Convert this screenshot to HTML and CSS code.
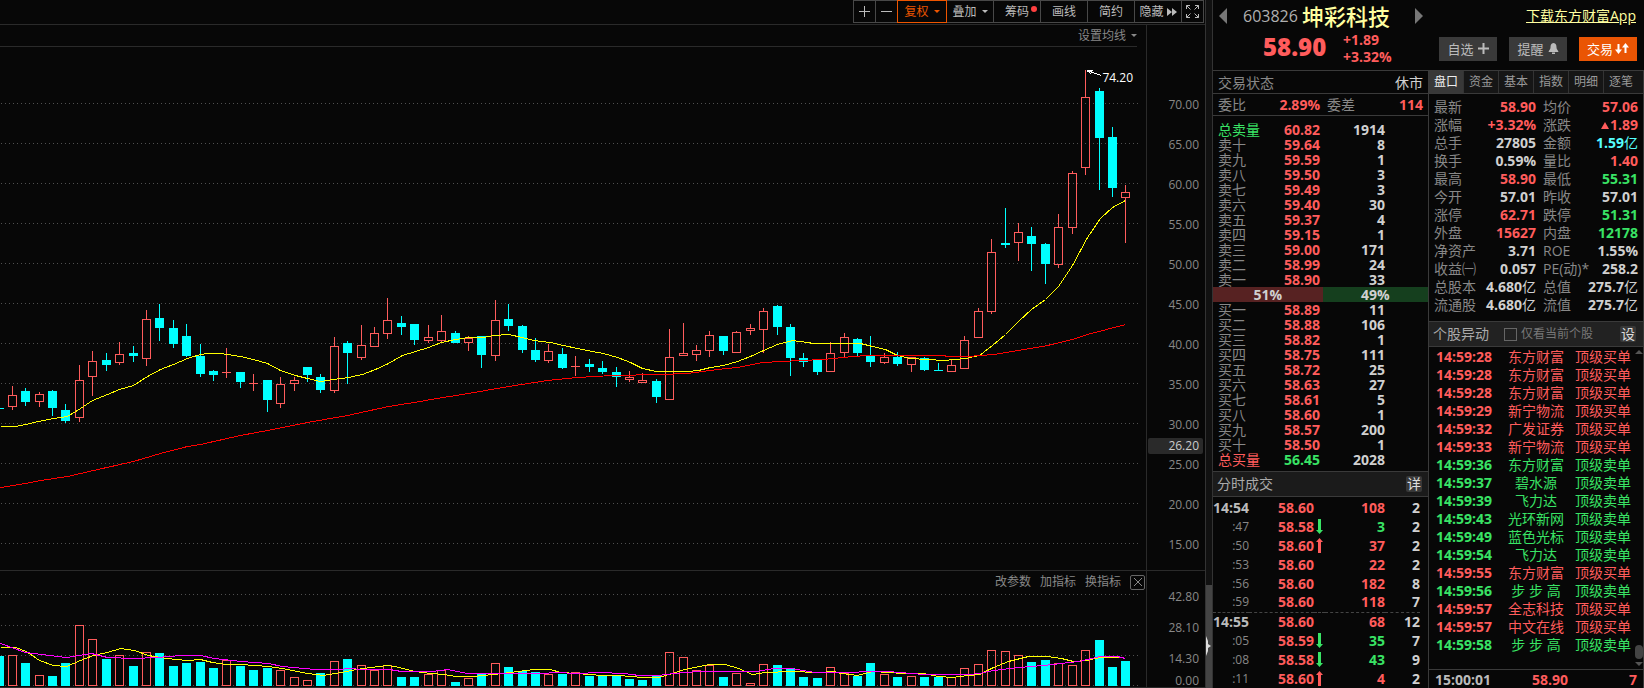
FILE: index.html
```html
<!DOCTYPE html>
<html lang="zh-CN">
<head>
<meta charset="utf-8">
<title>坤彩科技 603826</title>
<link rel="stylesheet" href="styles.css">
</head>
<body>
<main class="chart">
  <div class="toolbar">
    <button class="tool icon" aria-label="放大"><svg width="11" height="11" viewBox="0 0 11 11"><path d="M0 5.500h11M5.500 0v11" stroke="#bbb" fill="none"/></svg></button>
    <button class="tool icon" aria-label="缩小"><svg width="11" height="11" viewBox="0 0 11 11"><path d="M0 5.500h11" stroke="#bbb" fill="none"/></svg></button>
    <button class="tool active">复权<span class="caret"></span></button>
    <button class="tool">叠加<span class="caret"></span></button>
    <button class="tool">筹码<span class="dot"></span></button>
    <button class="tool">画线</button>
    <button class="tool">简约</button>
    <button class="tool tight">隐藏<svg width="10" height="8" viewBox="0 0 10 8"><path d="M0 0l5 4-5 4zM5 0l5 4-5 4z" fill="#bbb"/></svg></button>
    <button class="tool icon" aria-label="全屏"><svg width="13" height="13" viewBox="0 0 13 13"><path d="M.5 4V.5H4M9 .5h3.500V4M12.500 9v3.500H9M4 12.500H.5V9M.5.5l4 4M12.500.5l-4 4M12.500 12.500l-4-4M.5 12.500l4-4" stroke="#bbb" fill="none"/></svg></button>
  </div>
  <section class="pane price-pane">
    <div class="plot">
      <div class="ma-bar"><button class="plain">设置均线<span class="caret"></span></button></div>
      <div class="canvas">
        <svg id="price" viewBox="0 47 1146 523" preserveAspectRatio="none"></svg>
        <span class="peak">74.20</span>
      </div>
    </div>
    <div class="axis price-axis" id="price-axis"><span class="marker">26.20</span></div>
  </section>
  <section class="pane volume-pane">
    <div class="plot">
      <div class="canvas">
        <svg id="volume" viewBox="0 571 1146 116" preserveAspectRatio="none"></svg>
        <div class="indicator-bar">
          <button class="plain">改参数</button><button class="plain">加指标</button><button class="plain">换指标</button>
          <button class="close" aria-label="关闭"><svg width="8" height="8" viewBox="0 0 8 8"><path d="M0 0l8 8M8 0l-8 8" stroke="#888" fill="none"/></svg></button>
        </div>
      </div>
    </div>
    <div class="axis volume-axis"><span>42.80</span><span>28.10</span><span>14.30</span><span>0.00</span></div>
  </section>
</main>
<div class="splitter"><div class="thumb"><svg width="5" height="20" viewBox="0 0 5 20"><path d="M0 0l2 5v3l3 2-3 2v3l-2 5z" fill="#ddd"/></svg></div></div>
<aside class="quote">
  <header class="quote-head">
    <div class="title-row">
      <button class="nav prev" aria-label="上一只"></button>
      <span class="code">603826</span>
      <h1>坤彩科技</h1>
      <button class="nav next" aria-label="下一只"></button>
      <a class="download" href="#">下载东方财富App</a>
    </div>
    <div class="last-row">
      <strong class="last">58.90</strong>
      <div class="delta"><span>+1.89</span><span>+3.32%</span></div>
      <div class="actions">
        <button class="act">自选<svg width="11" height="11" viewBox="0 0 11 11"><path d="M0 5.500h11M5.500 0v11" stroke="#bbb" stroke-width="2" fill="none"/></svg></button>
        <button class="act">提醒<svg width="11" height="11" viewBox="0 0 11 11"><path d="M5.500 0C3 .5 2.500 2 2.500 4.500 2.500 6.500 1 7 .5 9h10C10 7 8.500 6.500 8.500 4.500 8.500 2 8 .5 5.500 0zM4 9.500h3V11H4z" fill="#bbb"/></svg></button>
        <button class="act trade">交易<svg width="14" height="11" viewBox="0 0 14 11"><path d="M2.500 1h2v5.500H7L3.500 11 0 6.500h2.500zM9.500 10h2V4.500H14L10.500 0 7 4.500h2.500z" fill="#fff"/></svg></button>
      </div>
    </div>
  </header>
  <div class="columns">
    <section class="col book">
      <div class="state"><span>交易状态</span><span class="w">休市</span></div>
      <div class="ratio"><span>委比</span><b class="r">2.89%</b><span>委差</span><b class="r">114</b></div>
      <table class="orders sells"><tbody id="sells"></tbody></table>
      <div class="balance"><b class="sell-side">51%</b><b class="buy-side">49%</b></div>
      <table class="orders"><tbody id="buys"></tbody></table>
      <div class="sub-head trades-head"><h2>分时成交</h2><button class="mini">详</button></div>
      <table class="trades"><tbody id="trades"></tbody></table>
    </section>
    <section class="col info">
      <nav class="tabs"><button class="on">盘口</button><button>资金</button><button>基本</button><button>指数</button><button>明细</button><button>逐笔</button></nav>
      <table class="stats"><tbody id="stats"></tbody></table>
      <div class="sub-head moves-head"><h2>个股异动</h2><label><input type="checkbox">仅看当前个股</label><button class="mini">设</button></div>
      <div class="moves-box">
        <table class="moves"><tbody id="moves"></tbody></table>
        <div class="scroll"><i class="up"></i><i class="grip"></i><i class="down"></i></div>
      </div>
      <div class="closing"><b>15:00:01</b><b class="r">58.90</b><b class="r">7</b></div>
    </section>
  </div>
</aside>
<script src="app.js"></script>
</body>
</html>
```
FILE: styles.css
```css
* { box-sizing: border-box; }
html { height: 100%; overflow: hidden; }
body {
  margin: 0; height: 100%; display: flex; overflow: hidden;
  background: #070707; color: #888;
  font: 14px/18px "Open Sans", "Noto Sans CJK SC", sans-serif;
}
button { font: inherit; color: inherit; background: none; border: 0; padding: 0; margin: 0; }
h1, h2 { margin: 0; font-weight: 400; }
table { border-collapse: collapse; table-layout: fixed; }
td { padding: 0; white-space: nowrap; }
svg { display: block; }
.r { color: #ff5c5c; }
.g { color: #39e365; }
.w { color: #d0d0d0; }
.c { color: #55ffff; }

/* chart side */
.chart { flex: 1; min-width: 0; display: flex; flex-direction: column; border-right: 1px solid #333; font-size: 12px; overflow: hidden; }
.toolbar { display: flex; flex: none; justify-content: flex-end; height: 25px; padding-right: 1px; border-bottom: 1px solid #2a2a2a; }
.tool {
  width: 48px; height: 23px; margin-left: -1px; border: 1px solid #484848; color: #bbb;
  display: flex; align-items: center; justify-content: center; gap: 5px; line-height: 20px; position: relative;
}
.tool.icon { width: 23px; }
.tool.tight { gap: 3px; }
.tool.active { color: #ee5500; border-color: #ee5500; z-index: 1; width: 50px; }
.caret { border: 3px solid transparent; border-top-color: currentColor; border-bottom: 0; }
.dot { position: absolute; right: 3px; top: 5px; width: 6px; height: 6px; border-radius: 50%; background: #ff4040; }
.pane { display: flex; min-height: 0; }
.price-pane { flex: 1; border-bottom: 1px solid #2a2a2a; }
.volume-pane { flex: none; height: 117px; border-bottom: 1px solid #2a2a2a; }
.plot { flex: 1; min-width: 0; display: flex; flex-direction: column; }
.ma-bar { display: flex; justify-content: flex-end; height: 22px; margin-right: 9px; border-bottom: 1px solid #2a2a2a; }
.plain { color: #888; display: flex; align-items: center; gap: 5px; line-height: 20px; }
.canvas { flex: 1; min-height: 0; position: relative; }
.canvas > svg { position: absolute; width: 100%; height: 100%; shape-rendering: crispEdges; }
.peak { position: absolute; right: 13px; top: 22px; color: #fff; }
.indicator-bar { position: absolute; top: 3px; right: 1px; display: flex; align-items: center; gap: 9px; height: 16px; }
.close { width: 15px; height: 15px; border: 1px solid #666; border-radius: 2px; display: flex; align-items: center; justify-content: center; }
.axis { width: 59px; border-left: 1px solid #2a2a2a; padding-right: 6px; text-align: right; position: relative; display: flex; flex-direction: column; }
.price-axis { padding-top: 60px; line-height: 40px; }
.marker { position: absolute; top: 413px; left: 1px; right: 2px; height: 16px; padding-right: 4px; line-height: 16px; border-radius: 2px; background: #2a2a2a; color: #ccc; }
.volume-axis { padding-top: 10px; line-height: 31px; }
.volume-axis span:last-child { line-height: 13px; }
.splitter { width: 6px; background: #111; display: flex; flex-direction: column; justify-content: flex-end; }
.thumb { height: 103px; background: #444; padding-top: 51px; }

/* quote side */
.quote { width: 432px; display: flex; flex-direction: column; border-left: 1px solid #333; overflow: hidden; }
.quote-head { flex: none; height: 71px; border-bottom: 1px solid #3a3a3a; padding: 0 7px 0 6px; }
.title-row { display: flex; align-items: center; height: 32px; }
.nav { border: 8px solid transparent; border-left-width: 0; border-right: 8px solid #777; }
.nav.next { border-left: 8px solid #777; border-right-width: 0; margin-left: 25px; }
.code { margin: 0 4px 0 16px; font-size: 16px; color: #b0b0b0; }
h1 { font-size: 22px; line-height: 32px; color: #ffffa0; font-weight: 500; }
.download { margin-left: auto; margin-right: 1px; color: #ffffa0; }
.last-row { display: flex; align-items: center; height: 33px; color: #ff5c5c; font-weight: 700; }
.last { width: 80px; margin-left: 44px; font-size: 24px; line-height: 30px; margin-bottom: 4px; }
.delta { display: flex; flex-direction: column; line-height: 17px; margin-bottom: 2px; }
.actions { margin-left: auto; display: flex; gap: 12px; }
.act { width: 58px; height: 24px; background: #3a3a3a; color: #bbb; font-size: 13px; font-weight: 400; display: flex; align-items: center; justify-content: center; gap: 4px; }
.act.trade { background: #ea5504; color: #fff; gap: 2px; }
.columns { flex: 1; display: flex; min-height: 0; overflow: hidden; }
.col { display: flex; flex-direction: column; min-width: 0; border-right: 1px solid #3a3a3a; }
.book { width: 216px; }
.info { flex: 1; }
.state, .ratio { display: flex; flex: none; justify-content: space-between; padding: 0 5px; border-bottom: 1px solid #3a3a3a; }
.state { height: 23px; line-height: 24px; }
.ratio { height: 22px; line-height: 21px; }
.ratio span { width: 36px; }
.ratio b { flex: 1; text-align: right; }
.ratio b:first-of-type { padding-right: 7px; flex: 0 0 73px; }
.orders { width: 172px; line-height: 15px; }
.sells { margin-top: 6px; }
.orders tr { height: 15px; }
.orders td:first-child { padding-left: 5px; width: 52px; }
.orders td:nth-child(2) { width: 55px; text-align: right; font-weight: 700; }
.orders td:last-child { text-align: right; font-weight: 700; }
.balance { display: flex; flex: none; height: 15px; line-height: 15px; text-align: center; color: #d0d0d0; }
.sell-side { flex: 51; background: #572222; }
.buy-side { flex: 49; background: #153f1e; }
.sub-head { display: flex; flex: none; align-items: center; height: 26px; padding: 0 6px 0 4px; background: #1b1b1b; border: 1px solid #3a3a3a; border-width: 1px 0; color: #aaa; }
h2 { font-size: 14px; }
.mini { width: 16px; height: 16px; margin-left: auto; background: #383838; color: #ddd; line-height: 16px; border-radius: 2px; display: flex; justify-content: center; }
.trades-head { margin-top: 4px; }
.trades { width: 207px; margin-top: 1px; }
.trades tr { height: 19px; font-weight: 700; }
.trades td { text-align: right; color: #d0d0d0; line-height: 18px; }
.trades td.r { color: #ff5c5c; }
.trades td.g { color: #39e365; }
.trades td:first-child { width: 36px; color: #bbb; }
.trades td.sec { font-weight: 400; font-size: 12px; color: #888; }
.trades td:nth-child(2) { width: 65px; }
.trades td:nth-child(3) { width: 11px; }
.trades td:nth-child(3) svg { margin-left: 2px; }
.trades td:nth-child(4) { width: 60px; }
.minute td { border-top: 1px dashed #444; }
.tabs { display: flex; flex: none; height: 23px; background: #161616; border-bottom: 1px solid #3a3a3a; font-size: 12px; }
.tabs button { width: 35px; flex: none; border-right: 1px solid #333; line-height: 22px; color: #999; }
.tabs button.on { background: #383838; color: #eee; }
.tabs button:last-child { flex: 1; border: 0; padding-right: 5px; }
.stats { width: 209px; margin-top: 4px; }
.stats tr { height: 18px; }
.stats td:nth-child(odd) { padding-left: 5px; }
.stats td:nth-child(3) { padding-left: 7px; }
.stats td:nth-child(even) { text-align: right; font-weight: 700; }
.stats td:first-child { width: 44px; }
.stats td:nth-child(2) { width: 63px; }
.stats td:nth-child(3) { width: 46px; }
.tri { display: inline-block; border: 4px solid transparent; border-top: 0; border-bottom: 7px solid; margin-right: 1px; vertical-align: 1px; }
.stats em { font-style: normal; font-weight: 400; }
.moves-head { margin-top: 7px; padding-right: 7px; background: #222; }
.moves-head label { display: flex; align-items: center; gap: 4px; margin-left: 15px; font-size: 12px; color: #777; }
.moves-head input { appearance: none; width: 13px; height: 13px; margin: 0; border: 1px solid #666; }
.moves-box { display: flex; height: 322px; flex: none; }
.moves { width: 205px; align-self: flex-start; margin-top: 1px; }
.moves tr { height: 18px; }
.moves td:first-child { width: 72px; padding-left: 7px; font-weight: 700; }
.moves td:nth-child(2) { width: 70px; text-align: center; }
.moves td:last-child { padding-left: 4px; }
.scroll { flex: 1; display: flex; flex-direction: column; align-items: center; padding: 3px 0; }
.up { border: 4px solid transparent; border-top: 0; border-bottom-color: #555; }
.grip { width: 8px; height: 14px; margin-top: auto; border-radius: 4px; background: #444; }
.down { margin-top: 3px; border: 4px solid transparent; border-bottom: 0; border-top-color: #555; }
.closing { display: flex; flex: none; border-top: 1px solid #3a3a3a; padding: 1px 6px; line-height: 17px; color: #bbb; }
.closing b:nth-child(2) { margin-left: 41px; }
.closing b:last-child { margin-left: auto; }
```
FILE: app.js
```js
const RED = '#ff5c5c', CYAN = '#00ffff';

// x, high, low, body top, body bottom, candle colour, volume top, volume colour
const bars = `-1 407 409 408 409 c 656 c
12 386 410 395 407 r 655 r
25 388 406 391 402 c 663 c
39 392 407 394 402 r 675 r
52 390 416 391 408 c 676 c
65 404 423 410 421 c 663 c
79 365 422 380 418 r 625 r
92 351 396 361 377 r 639 r
106 353 371 360 365 c 659 c
119 342 365 354 363 r 655 r
133 346 362 353 356 c 666 c
146 310 366 319 359 r 652 r
159 304 341 318 328 c 653 c
173 320 348 328 344 c 666 c
186 324 357 336 356 c 663 c
200 344 377 356 374 c 662 c
213 370 381 371 375 c 668 c
226 348 378 372 373 r 660 r
240 372 388 372 382 c 666 c
253 374 391 383 384 r 670 c
267 380 412 380 400 c 668 c
280 377 408 384 404 r 670 r
294 377 391 380 384 r 677 r
307 367 382 367 375 c 680 r
320 374 393 377 390 c 673 c
334 337 393 346 391 r 661 r
347 341 384 343 353 c 659 c
361 325 360 345 358 r 665 r
374 327 347 333 347 r 670 r
387 298 339 320 334 r 665 r
401 316 335 323 327 c 677 c
414 324 345 324 340 c 677 c
428 325 343 337 341 r 674 r
441 315 343 331 341 r 670 r
455 331 343 333 343 c 682 c
468 336 351 338 343 r 678 r
481 336 368 336 355 c 674 c
495 300 361 320 356 r 663 r
508 304 331 319 326 c 667 c
522 325 353 326 350 c 671 c
535 338 362 350 360 c 672 c
548 344 363 351 361 r 674 r
562 348 369 354 368 c 674 c
575 356 376 366 367 r 672 r
589 359 372 364 367 c 676 c
602 361 374 368 372 c 675 c
616 367 387 372 377 c 676 c
629 371 382 377 380 r 679 c
642 373 383 380 383 r 680 c
656 379 403 381 397 c 676 c
669 329 400 357 400 r 652 r
683 323 356 353 356 r 657 r
696 345 361 350 355 r 670 r
709 331 357 335 351 r 665 r
723 336 355 336 351 c 677 c
736 331 353 332 353 r 673 r
750 324 335 328 331 r 683 r
763 308 353 311 330 r 664 r
777 305 335 306 327 c 665 c
790 324 376 327 358 c 668 c
803 353 367 358 362 c 677 c
817 359 375 360 372 c 678 c
830 342 372 353 372 r 667 r
844 333 357 337 353 r 673 r
857 338 356 339 353 c 676 c
870 336 367 356 362 c 663 c
884 353 364 357 363 r 674 r
897 352 366 357 364 c 677 c
911 357 372 357 365 r 676 r
924 357 371 358 370 c 677 c
938 363 371 370 371 c 677 c
951 360 372 365 372 r 677 r
964 336 369 340 369 r 668 r
978 308 338 311 338 r 664 r
991 239 314 252 312 r 650 r
1005 208 248 243 245 c 651 r
1018 223 261 232 243 r 655 r
1031 227 271 236 244 c 662 c
1045 243 284 244 264 c 660 c
1058 214 268 227 265 r 663 r
1072 171 234 173 228 r 665 r
1085 70 175 97 168 r 650 r
1099 88 190 91 138 c 640 c
1112 127 197 137 188 c 667 c
1125 185 243 192 198 r 661 c`.split('\n').map(l => l.split(' ').map(v => isNaN(v) ? v : +v));

const ma10 = '0,426 15,426 25,424 38,421 53,418 67,416 80,408 92,400 107,394 119,389 133,385 147,376 160,369 173,364 187,358 200,354 208,353 220,353 240,356 253,359 267,363 280,370 295,375 307,378 320,381 333,379 348,377 362,374 375,369 388,363 402,355 415,351 428,347 441,342 455,339 468,337 483,337 493,335 508,334 522,337 533,340 550,342 563,345 577,348 592,351 603,353 617,357 630,362 642,368 656,371 688,371 698,370 710,367 723,365 737,361 750,356 763,350 777,344 792,340 807,342 813,343 860,343 872,346 885,349 897,355 910,358 927,359 943,360 965,358 979,355 992,345 1005,334 1018,321 1031,309 1045,299 1058,286 1072,265 1087,237 1100,218 1112,207 1125,200';
const ma60 = '0,487 25,483 40,480 67,476 93,470 133,461 160,453 187,446 200,444 240,435 267,430 307,422 347,415 388,406 420,401 430,399 468,393 508,386 547,380 577,377 612,375 660,374 687,373 717,369 737,367 762,362 800,360 823,359 852,356 867,355 943,355 947,356 967,356 993,354 1018,350 1047,345 1072,339 1087,334 1125,324';
const vol5 = '0,647 15,647 26,651 39,660 53,665 66,666 80,660 93,655 107,652 120,648 134,650 148,655 160,657 175,659 187,660 200,659 212,662 226,664 241,664 268,666 282,668 307,673 323,675 335,673 362,668 387,665 399,667 414,671 430,673 444,674 455,676 473,676 502,673 533,669 550,669 560,672 576,673 602,675 618,675 643,677 658,677 672,673 684,669 709,664 725,664 738,668 752,674 765,672 791,671 818,672 833,671 841,673 857,675 872,671 888,672 903,673 923,673 938,676 952,677 968,675 979,674 993,667 1008,661 1028,656 1047,656 1061,658 1073,661 1086,660 1100,657 1119,657';
const vol10 = '0,643 25,652 66,657 91,653 107,657 134,658 156,657 181,655 200,655 214,658 241,661 268,663 282,666 315,669 338,669 350,668 360,669 389,669 401,671 432,671 447,669 467,673 482,673 541,673 556,672 576,673 600,672 623,673 639,675 658,675 674,673 697,671 756,671 773,668 791,668 814,672 849,672 868,671 888,671 923,674 968,674 979,673 993,670 1018,667 1043,665 1078,661 1100,656 1117,656 1125,658';

const grid = ys => ys.map(y => `<path d="M1 ${y + .5}H1138" stroke="#505050" stroke-dasharray="1 3"/>`).join('');
const box = (x, top, bottom, kind) => kind === 'c'
  ? `<rect x="${x - 4}" y="${top}" width="9" height="${bottom - top}" fill="${CYAN}"/>`
  : bottom - top < 2
    ? `<rect x="${x - 4}" y="${top}" width="9" height="1" fill="${RED}"/>`
    : `<rect x="${x - 3.5}" y="${top + .5}" width="8" height="${bottom - top - 1}" fill="none" stroke="${RED}"/>`;
const line = (pts, color) => `<polyline points="${pts}" fill="none" stroke="${color}" transform="translate(.5 .5)"/>`;

const prices = [70, 65, 60, 55, 50, 45, 40, 35, 30, 25, 20, 15];
document.getElementById('price').innerHTML =
  grid(prices.map((p, i) => 103 + i * 40)) +
  bars.map(([x, hi, lo, top, bottom, k]) => {
    const color = k === 'c' ? CYAN : RED;
    return `<path d="M${x + .5} ${hi}V${top}M${x + .5} ${bottom}V${lo}" stroke="${color}"/>` + box(x, top, bottom, k);
  }).join('') + line(ma10, '#ffff00') + line(ma60, '#ff0000') +
  '<path d="M1087 70.500L1101 75.500M1087 70.500h6M1087 70.500l4 3M1088 70l4 2" stroke="#fff" fill="none"/>';
document.getElementById('volume').innerHTML =
  grid([594, 625, 655, 685]) +
  bars.map(b => box(b[0], b[6], 686, b[7])).join('') + line(vol5, '#ffff00') + line(vol10, '#ff00ff');
document.getElementById('price-axis').insertAdjacentHTML('afterbegin',
  prices.map(p => `<span>${p.toFixed(2)}</span>`).join(''));

const fill = (id, rows) => { document.getElementById(id).innerHTML = rows.join(''); };
const order = ([name, price, qty, a = '', b = 'r']) =>
  `<tr><td class="${a}">${name}</td><td class="${b}">${price}</td><td class="w">${qty}</td></tr>`;
fill('sells', [['总卖量', '60.82', 1914, 'g'], ['卖十', '59.64', 8], ['卖九', '59.59', 1], ['卖八', '59.50', 3],
  ['卖七', '59.49', 3], ['卖六', '59.40', 30], ['卖五', '59.37', 4], ['卖四', '59.15', 1], ['卖三', '59.00', 171],
  ['卖二', '58.99', 24], ['卖一', '58.90', 33]].map(order));
fill('buys', [['买一', '58.89', 11], ['买二', '58.88', 106], ['买三', '58.82', 1], ['买四', '58.75', 111],
  ['买五', '58.72', 25], ['买六', '58.63', 27], ['买七', '58.61', 5], ['买八', '58.60', 1], ['买九', '58.57', 200],
  ['买十', '58.50', 1], ['总买量', '56.45', 2028, 'r', 'g']].map(order));

const arrows = {
  u: '<svg width="7" height="15" viewBox="0 0 7 15"><path d="M3.500 0L7 4H5v11H2V4H0z" fill="#ff5c5c"/></svg>',
  d: '<svg width="7" height="15" viewBox="0 0 7 15"><path d="M3.500 15L7 11H5V0H2v11H0z" fill="#39e365"/></svg>'
};
fill('trades', [['14:54', '58.60', '', 108, 2, 'r'], [':47', '58.58', 'd', 3, 2, 'g'], [':50', '58.60', 'u', 37, 2, 'r'],
  [':53', '58.60', '', 22, 2, 'r'], [':56', '58.60', '', 182, 8, 'r'], [':59', '58.60', '', 118, 7, 'r'],
  ['14:55', '58.60', '', 68, 12, 'r'], [':05', '58.59', 'd', 35, 7, 'g'], [':08', '58.58', 'd', 43, 9, 'g'],
  [':11', '58.60', 'u', 4, 2, 'r']].map(([t, p, a, q, n, k]) =>
  `<tr class="${t === '14:55' ? 'minute' : ''}"><td class="${t[0] === ':' ? 'sec' : ''}">${t}</td><td class="r">${p}</td><td>${arrows[a] || ''}</td><td class="${k}">${q}</td><td>${n}</td></tr>`));

fill('stats', [['最新', '58.90', 'r', '均价', '57.06', 'r'], ['涨幅', '+3.32%', 'r', '涨跌', '<i class="tri"></i>1.89', 'r'],
  ['总手', '27805', 'w', '金额', '1.59<em>亿</em>', 'c'], ['换手', '0.59%', 'w', '量比', '1.40', 'r'],
  ['最高', '58.90', 'r', '最低', '55.31', 'g'], ['今开', '57.01', 'w', '昨收', '57.01', 'w'],
  ['涨停', '62.71', 'r', '跌停', '51.31', 'g'], ['外盘', '15627', 'r', '内盘', '12178', 'g'],
  ['净资产', '3.71', 'w', 'ROE', '1.55%', 'w'], ['收益㈠', '0.057', 'w', 'PE(动)*', '258.2', 'w'],
  ['总股本', '4.680<em>亿</em>', 'w', '总值', '275.7<em>亿</em>', 'w'],
  ['流通股', '4.680<em>亿</em>', 'w', '流值', '275.7<em>亿</em>', 'w']].map(([a, b, c, d, e, f]) =>
  `<tr><td>${a}</td><td class="${c}">${b}</td><td>${d}</td><td class="${f}">${e}</td></tr>`));

fill('moves', [['28', '东方财富', 'r'], ['28', '东方财富', 'r'], ['28', '东方财富', 'r'], ['29', '新宁物流', 'r'],
  ['32', '广发证券', 'r'], ['33', '新宁物流', 'r'], ['36', '东方财富', 'g'], ['37', '碧水源', 'g'], ['39', '飞力达', 'g'],
  ['43', '光环新网', 'g'], ['49', '蓝色光标', 'g'], ['54', '飞力达', 'g'], ['55', '东方财富', 'r'], ['56', '步 步 高', 'g'],
  ['57', '全志科技', 'r'], ['57', '中文在线', 'r'], ['58', '步 步 高', 'g']].map(([s, n, k]) =>
  `<tr class="${k}"><td>14:59:${s}</td><td>${n}</td><td>${k === 'r' ? '顶级买单' : '顶级卖单'}</td></tr>`));
```
